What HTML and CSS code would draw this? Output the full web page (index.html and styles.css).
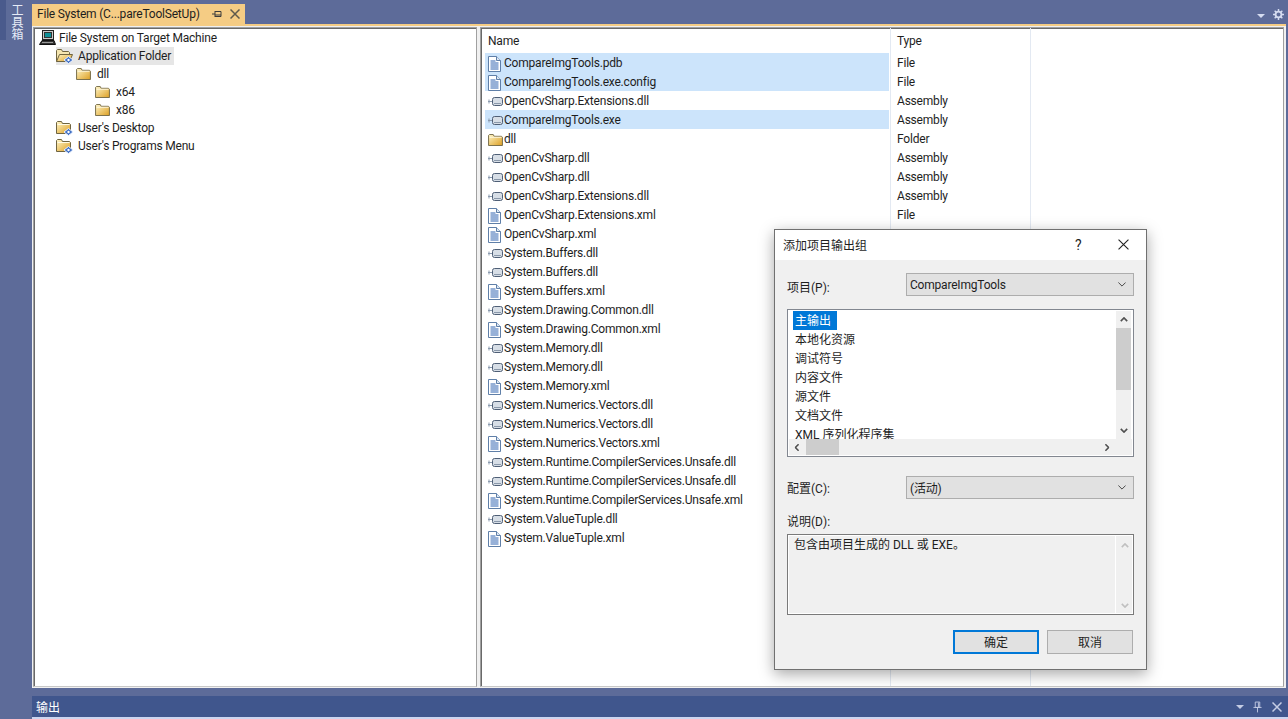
FILE: index.html
```html
<!DOCTYPE html>
<html lang="zh-CN">
<head>
  <meta charset="UTF-8" />
  <title>File System</title>
  <link rel="stylesheet" href="styles.css">
</head>
<body>

<svg class="sprites" width="0" height="0">
  <defs>
    <linearGradient id="folderFill" x1="0" y1="0" x2="1" y2="1">
      <stop offset="0" stop-color="#fff6c8"/>
      <stop offset="1" stop-color="#dd9f22"/>
    </linearGradient>
    <symbol id="folder" viewBox="0 0 16 13">
      <path d="M.5 12.500V1.500l1-1h4l1 2h8l1 1v9z" fill="url(#folderFill)" stroke="#6f6440"/>
      <path d="M1.500 3.500h13" stroke="#fffbe6"/>
    </symbol>
    <symbol id="badged" viewBox="0 0 18 16">
      <path d="M.5 13.500V2.500l1-1h4l1 2h7l1 1v9z" fill="url(#folderFill)" stroke="#6f6440"/>
      <path d="M1.500 4.500h12" stroke="#fffbe6"/>
      <path d="M12.500 8.500l4.500 3.500-4.500 3.500L8 12z" fill="#3f6fc4" stroke="#e8f0ff"/>
      <circle cx="12.500" cy="12" r="1.200" fill="#fff"/>
    </symbol>
    <symbol id="openBadged" viewBox="0 0 18 16">
      <path d="M.5 13.500V2.500l1-1h4l1 2h6l1 1v2" fill="#f5e6b0" stroke="#6f6440"/>
      <path d="M.5 13.500l3-7h13l-3 7z" fill="url(#folderFill)" stroke="#6f6440"/>
      <path d="M12.500 8.500l4.500 3.500-4.500 3.500L8 12z" fill="#3f6fc4" stroke="#e8f0ff"/>
      <circle cx="12.500" cy="12" r="1.200" fill="#fff"/>
    </symbol>
    <symbol id="doc" viewBox="0 0 13 16">
      <path d="M.5.500h8l4 4v11H.5z" fill="#fff" stroke="#5f7fa8"/>
      <path d="M8.500.500v4h4" fill="#dce8f5" stroke="#5f7fa8"/>
      <path d="M2.500 5h5M2.500 7h8M2.500 9h8M2.500 11h8M2.500 13h8" stroke="#2f62b0"/>
    </symbol>
    <symbol id="assembly" viewBox="0 0 16 11">
      <path d="M0 5.500h4" stroke="#8a9aae"/>
      <path d="M1 3.500v4" stroke="#8a9aae"/>
      <rect x="4.500" y="1.500" width="10" height="8" rx="2" fill="#d7dee6" stroke="#4f5f76"/>
      <path d="M6 7.500h7" stroke="#8a98aa"/>
    </symbol>
    <symbol id="computer" viewBox="0 0 17 16">
      <rect x="3.500" y=".5" width="11" height="9" fill="#c9c9c9" stroke="#222"/>
      <rect x="5.500" y="2.500" width="7" height="5" fill="#0f8f96" stroke="#333"/>
      <path d="M3 10.500h12l1.500 4H.5z" fill="#333" stroke="#111"/>
      <path d="M3 12.500h11" stroke="#999"/>
    </symbol>
    <symbol id="pin" viewBox="0 0 10 10">
      <path d="M0 5h3M3 2v6M3 2.500h6v5H3M3 6h6" fill="none" stroke="currentColor"/>
    </symbol>
    <symbol id="cross" viewBox="0 0 10 10">
      <path d="M.5.500l9 9M9.500.500l-9 9" fill="none" stroke="currentColor" stroke-width="1.500"/>
    </symbol>
    <symbol id="thinCross" viewBox="0 0 10 10">
      <path d="M.5.500l9 9M9.500.500l-9 9" fill="none" stroke="currentColor"/>
    </symbol>
    <symbol id="chev" viewBox="0 0 10 6">
      <path d="M.5.500L5 5 9.500.500" fill="none" stroke="currentColor" stroke-width="1.200"/>
    </symbol>
    <symbol id="arrow" viewBox="0 0 10 6">
      <path d="M1 1l4 4 4-4" fill="none" stroke="currentColor" stroke-width="2"/>
    </symbol>
  </defs>
</svg>

<div class="app">
  <div class="rail">
    <div class="rail-edge"></div>
    <div class="rail-label">工具箱</div>
  </div>

  <div class="main">
    <div class="tabstrip">
      <div class="tab">
        <span class="tab-title">File System (C...pareToolSetUp)</span>
        <svg class="tab-pin"><use href="#pin"/></svg>
        <svg class="tab-close"><use href="#cross"/></svg>
      </div>
      <div class="tab-tools">
        <span class="drop"></span>
        <svg class="gear" viewBox="0 0 12 12">
          <circle cx="6" cy="6" r="3.200" fill="none" stroke="#d5dcf0" stroke-width="2"/>
          <path d="M6 0v2.500M6 9.500V12M0 6h2.500M9.500 6H12M1.800 1.800l1.700 1.700M8.500 8.500l1.700 1.700M10.200 1.800L8.500 3.500M3.500 8.500l-1.700 1.700" stroke="#d5dcf0" stroke-width="1.600"/>
        </svg>
      </div>
    </div>
    <div class="accent"></div>

    <div class="panes">
      <div class="pane tree">
        <div class="node"><svg class="i-comp"><use href="#computer"/></svg>File System on Target Machine</div>
        <div class="node lvl1"><span class="node-sel"><svg class="i-badge"><use href="#openBadged"/></svg>Application Folder</span></div>
        <div class="node lvl2"><svg class="i-folder"><use href="#folder"/></svg>dll</div>
        <div class="node lvl3"><svg class="i-folder"><use href="#folder"/></svg>x64</div>
        <div class="node lvl3"><svg class="i-folder"><use href="#folder"/></svg>x86</div>
        <div class="node lvl1"><span class="node-sel off"><svg class="i-badge"><use href="#badged"/></svg>User's Desktop</span></div>
        <div class="node lvl1"><span class="node-sel off"><svg class="i-badge"><use href="#badged"/></svg>User's Programs Menu</span></div>
      </div>

      <div class="pane files">
        <div class="col-lines"><span class="col-a"></span><span class="col-b"></span></div>
        <div class="file-head"><span class="c-name">Name</span><span class="c-type">Type</span></div>
        <div class="row sel"><span class="c-name"><svg class="i-doc"><use href="#doc"/></svg>CompareImgTools.pdb</span><span class="c-type">File</span></div>
        <div class="row sel"><span class="c-name"><svg class="i-doc"><use href="#doc"/></svg>CompareImgTools.exe.config</span><span class="c-type">File</span></div>
        <div class="row"><span class="c-name"><svg class="i-asm"><use href="#assembly"/></svg>OpenCvSharp.Extensions.dll</span><span class="c-type">Assembly</span></div>
        <div class="row sel"><span class="c-name"><svg class="i-asm"><use href="#assembly"/></svg>CompareImgTools.exe</span><span class="c-type">Assembly</span></div>
        <div class="row"><span class="c-name"><svg class="i-dir"><use href="#folder"/></svg>dll</span><span class="c-type">Folder</span></div>
        <div class="row"><span class="c-name"><svg class="i-asm"><use href="#assembly"/></svg>OpenCvSharp.dll</span><span class="c-type">Assembly</span></div>
        <div class="row"><span class="c-name"><svg class="i-asm"><use href="#assembly"/></svg>OpenCvSharp.dll</span><span class="c-type">Assembly</span></div>
        <div class="row"><span class="c-name"><svg class="i-asm"><use href="#assembly"/></svg>OpenCvSharp.Extensions.dll</span><span class="c-type">Assembly</span></div>
        <div class="row"><span class="c-name"><svg class="i-doc"><use href="#doc"/></svg>OpenCvSharp.Extensions.xml</span><span class="c-type">File</span></div>
        <div class="row"><span class="c-name"><svg class="i-doc"><use href="#doc"/></svg>OpenCvSharp.xml</span></div>
        <div class="row"><span class="c-name"><svg class="i-asm"><use href="#assembly"/></svg>System.Buffers.dll</span></div>
        <div class="row"><span class="c-name"><svg class="i-asm"><use href="#assembly"/></svg>System.Buffers.dll</span></div>
        <div class="row"><span class="c-name"><svg class="i-doc"><use href="#doc"/></svg>System.Buffers.xml</span></div>
        <div class="row"><span class="c-name"><svg class="i-asm"><use href="#assembly"/></svg>System.Drawing.Common.dll</span></div>
        <div class="row"><span class="c-name"><svg class="i-doc"><use href="#doc"/></svg>System.Drawing.Common.xml</span></div>
        <div class="row"><span class="c-name"><svg class="i-asm"><use href="#assembly"/></svg>System.Memory.dll</span></div>
        <div class="row"><span class="c-name"><svg class="i-asm"><use href="#assembly"/></svg>System.Memory.dll</span></div>
        <div class="row"><span class="c-name"><svg class="i-doc"><use href="#doc"/></svg>System.Memory.xml</span></div>
        <div class="row"><span class="c-name"><svg class="i-asm"><use href="#assembly"/></svg>System.Numerics.Vectors.dll</span></div>
        <div class="row"><span class="c-name"><svg class="i-asm"><use href="#assembly"/></svg>System.Numerics.Vectors.dll</span></div>
        <div class="row"><span class="c-name"><svg class="i-doc"><use href="#doc"/></svg>System.Numerics.Vectors.xml</span></div>
        <div class="row"><span class="c-name"><svg class="i-asm"><use href="#assembly"/></svg>System.Runtime.CompilerServices.Unsafe.dll</span></div>
        <div class="row"><span class="c-name"><svg class="i-asm"><use href="#assembly"/></svg>System.Runtime.CompilerServices.Unsafe.dll</span></div>
        <div class="row"><span class="c-name"><svg class="i-doc"><use href="#doc"/></svg>System.Runtime.CompilerServices.Unsafe.xml</span></div>
        <div class="row"><span class="c-name"><svg class="i-asm"><use href="#assembly"/></svg>System.ValueTuple.dll</span></div>
        <div class="row"><span class="c-name"><svg class="i-doc"><use href="#doc"/></svg>System.ValueTuple.xml</span></div>
      </div>
    </div>

    <div class="output">
      <span class="output-title">输出</span>
      <div class="output-tools">
        <span class="drop"></span>
        <svg class="out-pin" viewBox="0 0 10 12"><path d="M2.500.500h5v6h-5zM.5 6.500h9M5 6.500V12M6 1v5" fill="none" stroke="#c4cce4"/></svg>
        <svg class="out-close"><use href="#cross"/></svg>
      </div>
    </div>
    <div class="output-edge"></div>
  </div>
</div>

<div class="dialog">
  <div class="dlg-title">
    <span class="dlg-name">添加项目输出组</span>
    <span class="dlg-help">?</span>
    <svg class="dlg-x"><use href="#thinCross"/></svg>
  </div>
  <div class="dlg-body">
    <div class="field">
      <span class="field-label">项目(P):</span>
      <div class="combo"><span>CompareImgTools</span><svg class="chev"><use href="#chev"/></svg></div>
    </div>

    <div class="listbox">
      <div class="list-top">
        <div class="list-items">
          <div class="item active">主输出</div>
          <div class="item">本地化资源</div>
          <div class="item">调试符号</div>
          <div class="item">内容文件</div>
          <div class="item">源文件</div>
          <div class="item">文档文件</div>
          <div class="item">XML 序列化程序集</div>
        </div>
        <div class="vbar">
          <svg class="arr up"><use href="#arrow"/></svg>
          <div class="vthumb"></div>
          <svg class="arr down"><use href="#arrow"/></svg>
        </div>
      </div>
      <div class="hbar">
        <svg class="arr left"><use href="#arrow"/></svg>
        <div class="hthumb"></div>
        <svg class="arr right"><use href="#arrow"/></svg>
      </div>
    </div>

    <div class="field second">
      <span class="field-label">配置(C):</span>
      <div class="combo"><span>(活动)</span><svg class="chev"><use href="#chev"/></svg></div>
    </div>

    <div class="desc-label">说明(D):</div>
    <div class="desc">
      <div class="desc-text">包含由项目生成的 DLL 或 EXE。</div>
      <div class="desc-bar">
        <svg class="arr up"><use href="#arrow"/></svg>
        <svg class="arr"><use href="#arrow"/></svg>
      </div>
    </div>

    <div class="buttons">
      <button class="btn primary">确定</button>
      <button class="btn">取消</button>
    </div>
  </div>
</div>

</body>
</html>
```

FILE: styles.css
```css
* {
  box-sizing: border-box;
  margin: 0;
  padding: 0;
}

html, body {
  width: 1288px;
  height: 719px;
  overflow: hidden;
}

body {
  background: #5d6b99;
  color: #1e1e1e;
  font-family: Roboto, "Noto Sans CJK SC", sans-serif;
  font-size: 12px;
}

.sprites {
  display: block;
}

.app {
  display: flex;
  height: 719px;
}

/* left toolbox rail */
.rail {
  width: 32px;
  display: flex;
  flex-shrink: 0;
}

.rail-edge {
  width: 6px;
  height: 40px;
  background: #4a5a8c;
}

.rail-label {
  writing-mode: vertical-rl;
  height: 40px;
  width: 12px;
  padding-top: 4px;
  margin-left: 4px;
  line-height: 12px;
  font-size: 12px;
  color: #e6ebf7;
}

.main {
  flex: 1;
  display: flex;
  flex-direction: column;
  min-width: 0;
}

/* document tab */
.tabstrip {
  height: 24px;
  padding-top: 4px;
  display: flex;
  justify-content: space-between;
}

.tab {
  width: 213px;
  height: 20px;
  background: #f5cc84;
  display: flex;
  align-items: center;
  padding-left: 5px;
  color: #1e1e1e;
}

.tab-title {
  width: 175px;
  white-space: nowrap;
  letter-spacing: -0.2px;
}

.tab-pin {
  width: 10px;
  height: 10px;
  color: #3c3c3c;
}

.tab-close {
  width: 10px;
  height: 10px;
  margin-left: 8px;
  color: #5f5a4c;
}

.tab-tools {
  display: flex;
  align-items: center;
  gap: 8px;
  padding: 0 4px 0 0;
  height: 20px;
}

.drop {
  width: 0;
  height: 0;
  border-left: 4px solid transparent;
  border-right: 4px solid transparent;
  border-top: 4px solid #d5dcf0;
  margin-top: 3px;
}

.gear {
  width: 11px;
  height: 11px;
}

.accent {
  height: 2px;
  margin-right: 2px;
  background: #f5cc84;
}

/* the two panes */
.panes {
  height: 662px;
  margin-right: 2px;
  background: #f0f0f0;
  display: flex;
  gap: 3px;
  padding: 1px 2px 1px 1px;
  letter-spacing: -0.2px;
}

.pane {
  background: #fff;
  border: 1px solid #a0a0a0;
  border-bottom-color: #c8c8c8;
  box-shadow: inset 1px 1px 0 #696969;
  overflow: hidden;
}

.tree {
  width: 444px;
  padding: 1px 0 0 5px;
}

.node {
  height: 18px;
  line-height: 18px;
  display: flex;
  align-items: center;
  white-space: nowrap;
  color: #1e1e1e;
}

.lvl1 { padding-left: 17px; }
.lvl2 { padding-left: 37px; }
.lvl3 { padding-left: 56px; }

.node-sel {
  display: flex;
  align-items: center;
  height: 18px;
  padding-right: 3px;
  background: #e6e6e6;
}

.node-sel.off {
  background: none;
}

.i-comp {
  width: 17px;
  height: 16px;
  margin-right: 3px;
}

.i-badge {
  width: 18px;
  height: 16px;
  margin-right: 4px;
}

.i-folder {
  width: 15px;
  height: 12px;
  margin-right: 6px;
}

.files {
  flex: 1;
  position: relative;
  padding: 0 4px;
}

.col-lines span {
  position: absolute;
  top: 0;
  bottom: 0;
  width: 1px;
  background: #e3e9f2;
}

.col-a { left: 409px; }
.col-b { left: 549px; }

.file-head {
  display: flex;
  align-items: center;
  height: 25px;
  padding-top: 1px;
  line-height: 18px;
}

.row {
  display: flex;
  height: 19px;
  line-height: 19px;
  position: relative;
}

.c-name {
  width: 412px;
  display: flex;
  align-items: center;
  padding-left: 3px;
  white-space: nowrap;
}

.row .c-name {
  padding-top: 2px;
}

.row .c-type {
  padding-top: 1px;
}

.row.sel .c-name {
  background: #cce4fb;
  width: 404px;
  margin-right: 8px;
}

.i-doc {
  width: 13px;
  height: 16px;
  margin-right: 3px;
}

.i-asm {
  width: 16px;
  height: 11px;
}

.i-dir {
  width: 15px;
  height: 12px;
  margin-right: 1px;
}

/* output tool window header */
.output {
  margin-top: 8px;
  height: 21px;
  background: #40568d;
  color: #fff;
  display: flex;
  justify-content: space-between;
  align-items: center;
  padding: 0 6px 0 4px;
}

.output-tools {
  display: flex;
  align-items: center;
  gap: 9px;
}

.output-tools .drop {
  border-top-color: #c4cce4;
  margin-top: 1px;
}

.out-pin {
  width: 9px;
  height: 12px;
}

.out-close {
  width: 10px;
  height: 10px;
  margin-left: 1px;
  color: #c4cce4;
}

.output-edge {
  height: 2px;
  background: #ccd5f0;
}

/* modal dialog */
.dialog {
  position: absolute;
  left: 774px;
  top: 229px;
  width: 373px;
  height: 441px;
  border: 1px solid #707070;
  background: #f0f0f0;
  box-shadow: 0 4px 14px rgba(0, 0, 0, 0.35);
  display: flex;
  flex-direction: column;
}

.dlg-title {
  height: 30px;
  padding-bottom: 1px;
  background: #fff;
  display: flex;
  align-items: center;
  padding-left: 8px;
  color: #1e1e1e;
  flex-shrink: 0;
}

.dlg-name {
  width: 292px;
}

.dlg-help {
  width: 43px;
  font-size: 14px;
}

.dlg-x {
  width: 11px;
  height: 11px;
  color: #222;
}

.dlg-body {
  padding: 13px 12px 0 12px;
  display: flex;
  flex-direction: column;
  flex: 1;
}

.field {
  display: flex;
  align-items: center;
  height: 23px;
}

.field.second {
  margin-top: 19px;
}

.field-label {
  width: 119px;
  padding-top: 3px;
}

.field.second .field-label {
  padding-top: 0;
}

.combo {
  flex: 1;
  height: 23px;
  background: #e1e1e1;
  border: 1px solid #adadad;
  display: flex;
  align-items: center;
  justify-content: space-between;
  padding: 0 3px;
  letter-spacing: -0.2px;
}

.chev {
  width: 8px;
  height: 5px;
  color: #444;
  display: block;
}

.combo .chev {
  margin-right: 4px;
}

.arr {
  width: 8px;
  height: 5px;
  color: #505050;
  display: block;
}

.arr.up { transform: rotate(180deg); }
.arr.left { transform: rotate(90deg); }
.arr.right { transform: rotate(-90deg); }

.listbox {
  margin-top: 13px;
  height: 148px;
  background: #fff;
  border: 1px solid #828790;
  padding: 1px;
  display: flex;
  flex-direction: column;
}

.list-top {
  display: flex;
  height: 128px;
}

.list-items {
  flex: 1;
  padding-left: 4px;
  overflow: hidden;
}

.item {
  height: 19px;
  line-height: 21px;
  padding: 0 2px;
  width: max-content;
}

.item.active {
  background: #0078d7;
  color: #fff;
  padding-right: 6px;
}

.vbar {
  width: 15px;
  margin-right: 1px;
  background: #f0f0f0;
  display: flex;
  flex-direction: column;
  align-items: center;
}

.vbar .up {
  margin: 6px 0;
}

.vthumb {
  width: 15px;
  height: 62px;
  background: #cdcdcd;
}

.vbar .down {
  margin-top: 38px;
}

.hbar {
  height: 16px;
  background: #f0f0f0;
  display: flex;
  align-items: center;
  padding-left: 4px;
}

.hthumb {
  width: 33px;
  height: 16px;
  background: #cdcdcd;
  margin-left: 5px;
}

.hbar .right {
  margin-left: 264px;
}

.desc-label {
  margin-top: 14px;
  height: 18px;
  line-height: 18px;
}

.desc {
  margin-top: 3px;
  height: 81px;
  border: 1px solid #7a7a7a;
  box-shadow: inset 0 0 0 1px #fff;
  display: flex;
}

.desc-text {
  flex: 1;
  padding: 1px 0 0 6px;
  line-height: 18px;
}

.desc-bar {
  width: 18px;
  border-left: 1px solid #fff;
  display: flex;
  flex-direction: column;
  align-items: center;
  justify-content: space-between;
  padding: 8px 0 6px;
}

.desc-bar .arr {
  color: #c0c0c0;
}

.buttons {
  margin-top: 15px;
  display: flex;
  justify-content: flex-end;
  gap: 8px;
  padding-right: 1px;
}

.btn {
  width: 86px;
  height: 24px;
  padding-bottom: 2px;
  background: #e1e1e1;
  border: 1px solid #adadad;
  font: inherit;
  color: #1e1e1e;
}

.btn.primary {
  border: 2px solid #0078d7;
}
```
